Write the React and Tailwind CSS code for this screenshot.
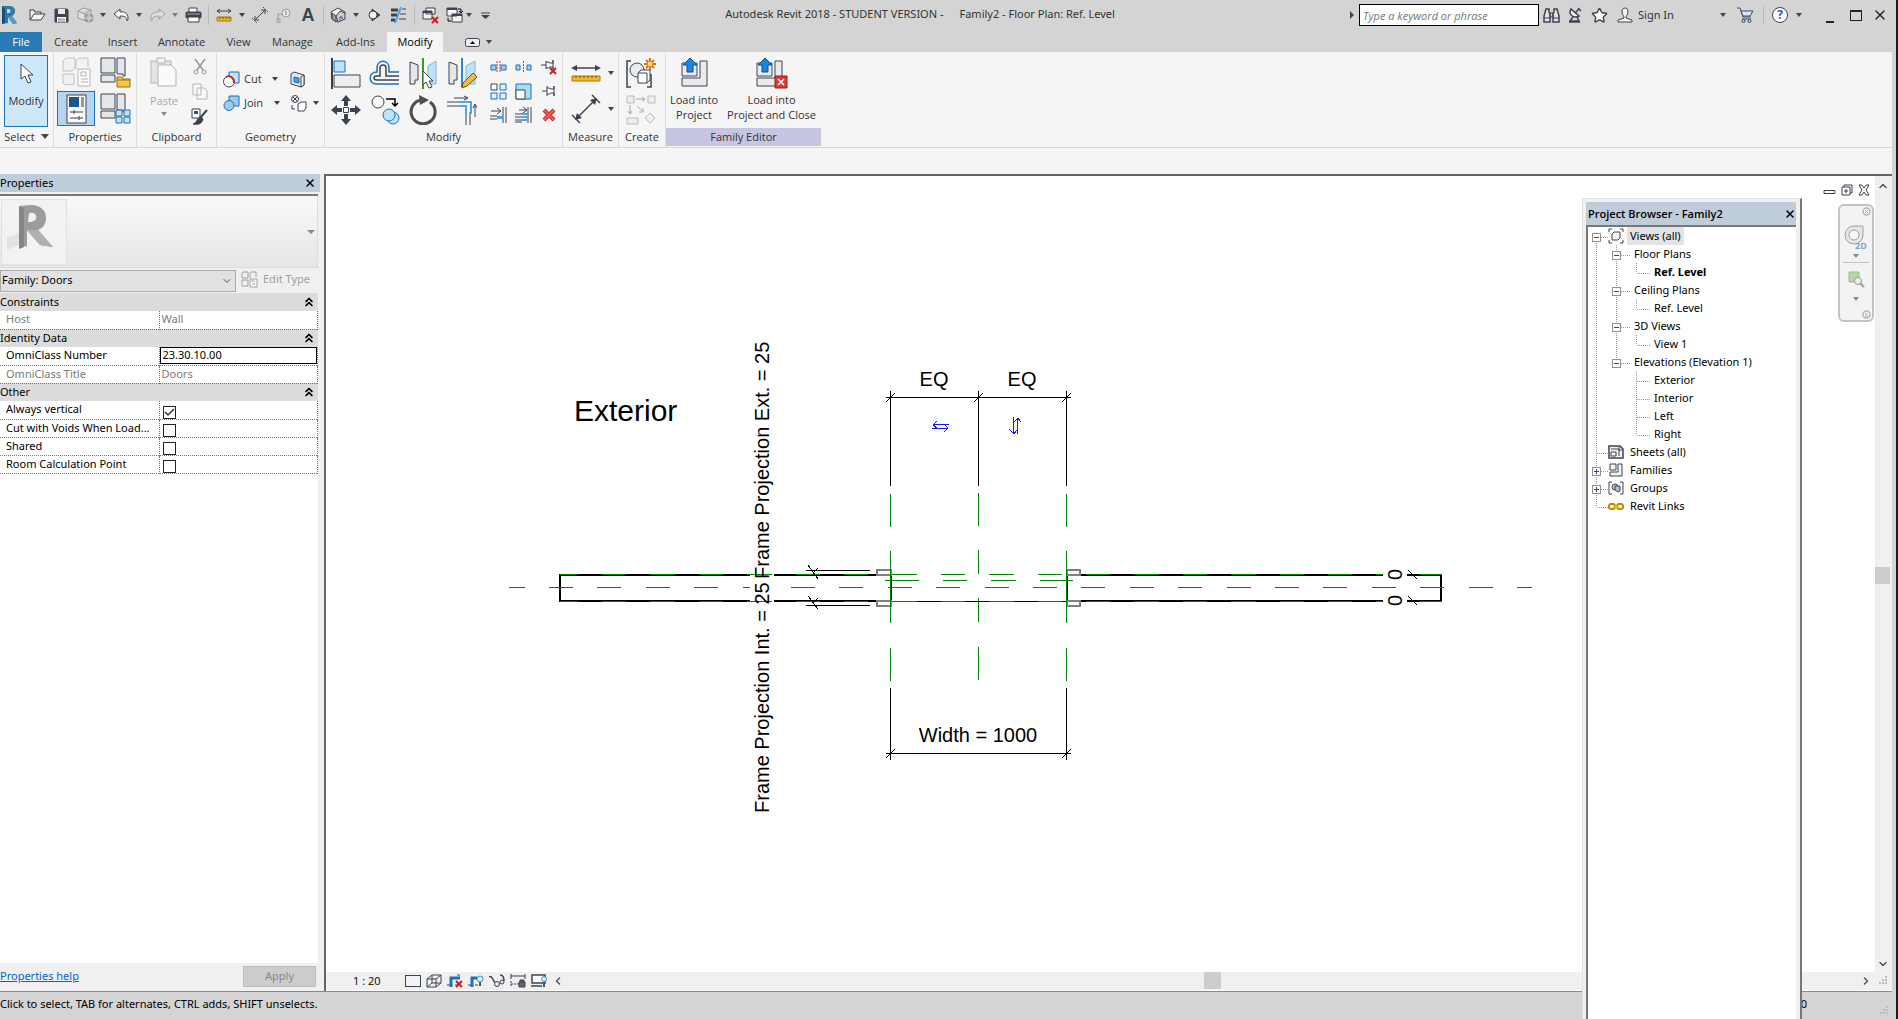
import { ChevronDown, ChevronLeft, ChevronRight, ChevronUp, ChevronsUp, Star, X } from "lucide-react";

const DARK = "#3c4350";
const BLUE = "#1a6fc0";
const SKY = "#bfe3f5";

function Icon({ w = 16, h = 16, children, className = "" }) {
  return (
    <svg width={w} height={h} viewBox={`0 0 ${w} ${h}`} fill="none" stroke={DARK} className={`shrink-0 ${className}`} aria-hidden>
      {children}
    </svg>
  );
}

function Caret({ className = "" }) {
  return (
    <svg width="6" height="4" viewBox="0 0 6 4" className={`shrink-0 fill-[#444] ${className}`} aria-hidden>
      <path d="M0 0h6L3 4z" />
    </svg>
  );
}

/* ---------- title bar icons ---------- */

const RevitLogo = () => (
  <Icon w={16} h={20}>
    <path d="M1 1h7c4 0 6 2 6 5 0 2-1 4-3 5l5 7-4 1-5-7v6l-6 1z" fill="#2d78ad" stroke="none" />
    <path d="M1 1l3 3v14l-3 1z" fill="#174f7c" stroke="none" />
    <path d="M6 4h2c2 0 2 4 0 4H6z" fill="#d4d4d4" stroke="none" />
    <path d="M11 11l5 7-4 1-5-7z" fill="#4f9acb" stroke="none" />
  </Icon>
);
const OpenIcon = () => (
  <Icon w={17} h={14}>
    <path d="M1 12V2h4l1 2h6v2" fill="#f4f4f4" />
    <path d="M1 12l4-6h11l-4 6z" fill="#f4f4f4" />
  </Icon>
);
const SaveIcon = () => (
  <Icon w={15} h={15}>
    <path d="M1 1h12l1 1v12H1z" fill={DARK} />
    <path d="M4 1h7v5H4z" fill="#e8e8e8" stroke="none" />
    <path d="M3 9h9v5H3z" fill="#fff" stroke="none" />
    <path d="M4 11h7M4 13h7" stroke="#777" />
  </Icon>
);
const SyncIcon = () => (
  <Icon w={17} h={17}>
    <path d="M1 4l5-3 8 2v6l-5 5-8-3zM1 4l7 3 6-4M8 7v7" stroke="#999" fill="#e0e0e0" />
    <circle cx="12" cy="11" r="4" fill="#aaa" stroke="#888" />
    <path d="M12 7v8M8 11h8" stroke="#ddd" />
  </Icon>
);
const ArrowIcon = ({ flip, color, fill }) => (
  <Icon w={17} h={14} className={flip ? "-scale-x-100" : ""}>
    <path d="M1 6l6-5v3c5-1 8 2 8 6 0 1 0 2-1 3 0-4-2-5-7-5v3z" fill={fill} stroke={color} strokeLinejoin="round" />
  </Icon>
);
const PrintIcon = () => (
  <Icon w={17} h={16}>
    <path d="M4 5V1h8v4" fill="#fff" />
    <rect x="1" y="5" width="15" height="6" rx="1" fill={DARK} />
    <path d="M2 7h13" stroke="#aaa" />
    <path d="M3 10h11v5H3z" fill="#fff" />
  </Icon>
);
const RulerIcon = () => (
  <Icon w={16} h={14}>
    <path d="M1 3h14M4 1L1 3l3 2M12 1l3 2-3 2" />
    <path d="M1 9h14v4H1z" fill="#f2b72c" stroke="#a9740f" />
    <path d="M4 9v2M7 9v2M10 9v2M13 9v2" stroke="#6b4c0d" />
  </Icon>
);
const DimIcon = () => (
  <Icon w={16} h={16}>
    <path d="M3 13L13 3M3 9v4h4M9 3h4v4" />
    <path d="M0 11l5 5M11 0l5 5" strokeDasharray="2 1" />
  </Icon>
);
const TagIcon = () => (
  <Icon w={16} h={15}>
    <circle cx="10" cy="5" r="4" fill="#e8e8e8" stroke="#999" />
    <path d="M9 4l1-1v4" stroke="#888" />
    <path d="M6 6H2v5" stroke="#999" />
    <rect x="1" y="11" width="3" height="3" stroke="#999" />
  </Icon>
);
const HouseIcon = () => (
  <Icon w={16} h={16}>
    <path d="M1 5l7-4 7 4-1 7-6 3-6-3z" fill="#f2f2f2" />
    <path d="M2 6l4 3v6l-4-3z" fill="#9aa3ad" />
    <path d="M6 9l4-5 5 2v6l-7 3z" fill="#c7ccd2" />
    <path d="M10 13v-3h2v2" fill="#fff" />
  </Icon>
);
const SectionIcon = () => (
  <Icon w={14} h={14}>
    <path d="M5 1l8 6-8 6z" fill={DARK} />
    <circle cx="6" cy="7" r="4" fill="#f2f2f2" />
  </Icon>
);
const ThinLinesIcon = () => (
  <Icon w={17} h={16}>
    <path d="M1 3h7M1 8h6M1 13h4" strokeWidth="3" />
    <path d="M12 2h4M10 7h6M9 12h7" />
    <path d="M11 0L5 16" stroke="#4aa0ec" strokeWidth="2" />
  </Icon>
);
const CloseHiddenIcon = () => (
  <Icon w={17} h={17}>
    <path d="M4 1h9v6H4zM1 4h9v8H1z" fill="#f4f4f4" />
    <path d="M1 5h9" strokeWidth="2" />
    <path d="M10 10l6 6M16 10l-6 6" stroke="#c91c1c" strokeWidth="2" />
  </Icon>
);
const SwitchIcon = () => (
  <Icon w={17} h={17}>
    <path d="M1 1h10v8H1zM6 7h10v8H6z" fill="#f4f4f4" />
    <path d="M1 2h10M6 8h10" strokeWidth="2" />
    <path d="M12 2h3v3M13 4l2 2 2-2M2 11v3h3" stroke="#000" />
  </Icon>
);
const CustomizeIcon = () => (
  <Icon w={9} h={7}>
    <path d="M0 1h9" strokeWidth="1" />
    <path d="M0 3h9L4.500 7z" fill={DARK} stroke="none" />
  </Icon>
);

const BarLine = () => <span className="h-5 w-px bg-[#b9b9b9]" />;

const QUICK_ACCESS = [
  { id: "Revit", w: "w-[18px]", el: <RevitLogo /> },
  { id: "Open", w: "ml-2 w-[22px]", el: <OpenIcon /> },
  { id: "Save", w: "w-[26px]", el: <SaveIcon /> },
  { id: "Synchronize", w: "w-[22px]", el: <SyncIcon /> },
  { id: "Synchronize options", w: "w-[14px]", el: <Caret /> },
  { id: "Undo", w: "w-[22px]", el: <ArrowIcon color={DARK} fill="#fff" /> },
  { id: "Undo history", w: "w-[14px]", el: <Caret /> },
  { id: "Redo", w: "w-[22px]", el: <ArrowIcon flip color="#a0a0a0" fill="#ddd" /> },
  { id: "Redo history", w: "w-[14px]", el: <Caret className="opacity-60" /> },
  { id: "Print", w: "w-[22px]", el: <PrintIcon /> },
  { sep: true, id: "s1", w: "w-[9px]" },
  { id: "Measure", w: "w-[21px]", el: <RulerIcon /> },
  { id: "Measure options", w: "w-4", el: <Caret /> },
  { id: "Aligned dimension", w: "w-5", el: <DimIcon /> },
  { id: "Tag", w: "w-7", el: <TagIcon /> },
  { id: "Text", w: "w-5", el: <span className="font-['Liberation_Sans',sans-serif] text-lg font-bold text-[#3c4350]">A</span> },
  { sep: true, id: "s2", w: "w-[10px]" },
  { id: "Default 3D view", w: "w-5", el: <HouseIcon /> },
  { id: "3D options", w: "w-4", el: <Caret /> },
  { id: "Section", w: "w-5", el: <SectionIcon /> },
  { id: "Thin lines", w: "w-7", el: <ThinLinesIcon /> },
  { sep: true, id: "s3", w: "w-1" },
  { id: "Close hidden windows", w: "w-7", el: <CloseHiddenIcon /> },
  { id: "Switch windows", w: "w-5", el: <SwitchIcon /> },
  { id: "Window list", w: "w-[10px]", el: <Caret /> },
  { id: "Customize", w: "w-[22px]", el: <CustomizeIcon /> },
];

function TitleBar() {
  return (
    <header className="flex h-[30px] shrink-0 items-center">
      <div className="flex items-center">
        {QUICK_ACCESS.map((item) =>
          item.sep ? (
            <span key={item.id} className={`flex justify-center ${item.w}`}>
              <BarLine />
            </span>
          ) : (
            <button key={item.id} type="button" aria-label={item.id} className={`flex h-5 items-center justify-center ${item.w}`}>
              {item.el}
            </button>
          )
        )}
      </div>
      <div className="flex flex-1 justify-center gap-4 pr-[6px] pb-[2px] font-['Noto_Sans',sans-serif] whitespace-nowrap text-[#333]">
        <span>Autodesk Revit 2018 - STUDENT VERSION -</span>
        <span>Family2 - Floor Plan: Ref. Level</span>
      </div>
      <div className="flex shrink-0 items-center pr-1">
        <svg width="4" height="8" className="mr-[5px] fill-[#444]" aria-hidden>
          <path d="M0 0l4 4-4 4z" />
        </svg>
        <input
          type="text"
          aria-label="Search"
          placeholder="Type a keyword or phrase"
          className="h-[22px] w-[180px] border border-black bg-white px-[3px] text-[11px] italic placeholder:text-[#777]"
        />
        <button type="button" aria-label="Find" className="flex w-6 justify-center">
          <Icon w={17} h={16}>
            <path d="M3 2h3v3l1 2v8H1V9zM11 2h3l2 7v6h-6V7l1-2z" fill="#dfe3ea" strokeWidth="1.500" />
            <path d="M7 6h3v4H7zM1 11h6M10 11h6" />
          </Icon>
        </button>
        <button type="button" aria-label="Communication center" className="flex w-6 justify-center">
          <Icon w={14} h={16}>
            <path d="M3 2c-3 5 2 10 8 7z" fill="#f2f2f2" strokeWidth="1.500" />
            <path d="M7 6l4-4M10 1l3 3M5 10l-3 4h9l-2-4M1 15h11" strokeWidth="1.500" />
          </Icon>
        </button>
        <button type="button" aria-label="Favorites" className="flex w-6 justify-center">
          <Star size={17} strokeWidth={2} className="fill-white text-[#3c4350]" />
        </button>
        <button type="button" className="ml-[6px] flex items-center gap-[5px] text-[#333]">
          <Icon w={16} h={16}>
            <path d="M5 4c0-4 6-4 6 0 0 3-1 4-2 6v1l6 2v2H1v-2l6-2v-1C6 8 5 7 5 4z" fill="#f2f2f2" />
          </Icon>
          <span className="w-[38px] text-left font-['Noto_Sans',sans-serif] whitespace-nowrap">Sign In</span>
        </button>
        <button type="button" aria-label="Account menu" className="ml-[43px] flex w-[8px] justify-center">
          <Caret />
        </button>
        <button type="button" aria-label="App store" className="ml-[8px] flex w-5 justify-center">
          <Icon w={17} h={16}>
            <path d="M0 1h3l3 9h8" stroke="#3b4a6b" />
            <path d="M4 4h12l-3 5H6z" fill="#dfe6f3" stroke="#3b4a6b" />
            <path d="M5 12h9" stroke="#3b4a6b" />
            <circle cx="6.500" cy="14" r="1.500" stroke="#3b4a6b" />
            <circle cx="12.500" cy="14" r="1.500" stroke="#3b4a6b" />
          </Icon>
        </button>
        <span className="mx-[8px]">
          <span className="block h-[18px] w-px bg-[#b9b9b9]" />
        </span>
        <button
          type="button"
          aria-label="Help"
          className="flex size-4 items-center justify-center rounded-full border border-[#3c4350] bg-white text-[12px] leading-3 font-bold text-[#2457b8]"
        >
          ?
        </button>
        <Caret className="ml-[8px]" />
        <button type="button" aria-label="Minimize" className="ml-5 flex h-4 w-4 items-end justify-center">
          <span className="h-[2px] w-2 bg-[#222]" />
        </button>
        <button type="button" aria-label="Maximize" className="ml-2 flex w-5 justify-center">
          <span className="h-[11px] w-3 border border-t-2 border-[#222]" />
        </button>
        <button type="button" aria-label="Close" className="ml-[6px] flex w-4 justify-center text-[#222]">
          <X size={16} strokeWidth={2} />
        </button>
      </div>
    </header>
  );
}

const TABS = [
  ["Create", "w-[54px]"],
  ["Insert", "w-[49px]"],
  ["Annotate", "w-[69px]"],
  ["View", "w-[45px]"],
  ["Manage", "w-[63px]"],
  ["Add-Ins", "w-[63px]"],
];

function Tabs() {
  return (
    <nav className="mt-[2px] flex h-5 shrink-0 text-[#333]">
      <button type="button" className="mr-[2px] w-[42px] bg-[#2a7ab5] text-white">
        File
      </button>
      {TABS.map(([name, width]) => (
        <button key={name} type="button" className={width}>
          {name}
        </button>
      ))}
      <button type="button" className="w-14 bg-[#f5f5f5] text-black">
        Modify
      </button>
      <button type="button" aria-label="Minimize ribbon" className="ml-[22px] flex items-center gap-[6px]">
        <Icon w={15} h={9}>
          <rect x="0.500" y="0.500" width="14" height="8" rx="2" fill="#eee" />
          <path d="M5 6l2.500-3L10 6z" fill="#000" stroke="none" />
        </Icon>
        <Caret />
      </button>
    </nav>
  );
}

/* ---------- ribbon ---------- */

function Panel({ label, width, children, className = "" }) {
  return (
    <section className={`flex shrink-0 flex-col border-r border-[#dcdcdc] ${width}`}>
      <div className={`flex h-[75px] ${className}`}>{children}</div>
      <h2 className="flex h-[17px] items-center justify-center gap-[6px] whitespace-nowrap">{label}</h2>
    </section>
  );
}

function Tool({ name, className = "", children }) {
  return (
    <button type="button" aria-label={name} className={`flex items-center justify-center ${className}`}>
      {children}
    </button>
  );
}

const TypeGrid = ({ color = DARK, fill = "#e4e7ea" }) => (
  <>
    <path d="M1 1h14v15H1zM17 1h8v18h-2v-2h-6zM1 18h14v7H1z" fill={fill} stroke={color} />
  </>
);

const LoadGlyph = () => (
  <>
    <path d="M1 5h15v13H1zM19 3h7v25H1v-8h18z" fill="#e9ebee" />
    <path d="M9 0l7 7h-4v7H6V7H2z" fill="#1c84e6" stroke="#0f4f96" />
  </>
);

function Ribbon() {
  return (
    <div className="flex h-[96px] shrink-0 border-b border-[#d6d6d6] bg-[#f5f5f5] pt-[1px] text-[#333]">
      <Panel
        width="w-[54px]"
        className="px-1 pt-[2px]"
        label={
          <>
            <span>Select</span>
            <svg width="8" height="5" className="fill-[#444]" aria-hidden>
              <path d="M0 0h8L4 5z" />
            </svg>
          </>
        }
      >
        <button type="button" className="flex h-[72px] w-11 flex-col items-center border border-[#1a73c4] bg-[#cce8f8] pt-[7px]">
          <Icon w={14} h={22}>
            <path d="M2 1v15l4-3 3 7 3-1-3-7h5z" fill="#fff" />
          </Icon>
          <span className="mt-2">Modify</span>
        </button>
      </Panel>

      <Panel label="Properties" width="w-[83px]" className="flex-wrap content-start pt-[1px] pl-[3px]">
        <Tool name="Family category" className="h-[37px] w-[38px]">
          <Icon w={31} h={31}>
            <path d="M2 4l3-3h9v10l-3 3H2zM15 4l3-3h9v9M2 17h11v10l-9 1-2-2zM15 4v8" fill="#f0f0f0" stroke="#c2c2c2" />
            <path d="M17 12h12v17H17z" fill="#fafafa" stroke="#b5b5b5" />
            <path d="M20 15h5v4h-5zM20 22h7M20 25h7" stroke="#b5b5b5" />
          </Icon>
        </Tool>
        <Tool name="Family types" className="h-[37px] w-[41px]">
          <Icon w={31} h={31}>
            <TypeGrid />
            <path d="M17 20h5l1 2h7v8H17z" fill="#f7c845" stroke="#9a6a08" />
            <path d="M17 23h13" stroke="#9a6a08" />
          </Icon>
        </Tool>
        <Tool name="Properties palette" className="h-[35px] w-[38px] border border-[#1a73c4] bg-[#b5d4f0]">
          <Icon w={21} h={30}>
            <rect x="1" y="1" width="19" height="28" fill="#fafafa" />
            <path d="M3 3h10v10H3z" fill="#1f568f" stroke="none" />
            <path d="M15 3h3v10h-3z" fill="#999" stroke="none" />
            <path d="M4 18h13M4 24h13M8 16v4M13 22v4" />
          </Icon>
        </Tool>
        <Tool name="Type properties" className="h-[35px] w-[41px]">
          <Icon w={31} h={31}>
            <TypeGrid />
            <path d="M16 17h6v6h-6zM24 17h6v6h-6zM16 24h6v6h-6zM24 24h6v6h-6z" fill={SKY} stroke={BLUE} />
          </Icon>
        </Tool>
      </Panel>

      <Panel label="Clipboard" width="w-[80px]">
        <button type="button" className="flex w-[54px] flex-col items-center pt-1 text-[#a8a8a8]">
          <Icon w={28} h={31}>
            <path d="M1 4h20v22H1z" fill="#e4e4e4" stroke="#b5b5b5" />
            <path d="M7 1h8v5H7z" fill="#f5f5f5" stroke="#b5b5b5" />
            <path d="M8 8h13l5 5v16H8z" fill="#fafafa" stroke="#b5b5b5" />
          </Icon>
          <span className="mt-[6px] leading-[14px]">Paste</span>
          <Caret className="mt-[4px] opacity-60" />
        </button>
        <div className="flex flex-col items-center justify-between pt-[5px] pb-[3px]">
          <Tool name="Cut to clipboard">
            <Icon w={16} h={17}>
              <path d="M3 1l8 11M13 1L5 12" stroke="#999" strokeWidth="1.500" />
              <circle cx="4" cy="14" r="2" stroke="#999" />
              <circle cx="12" cy="14" r="2" stroke="#999" />
            </Icon>
          </Tool>
          <Tool name="Copy to clipboard">
            <Icon w={16} h={17}>
              <path d="M1 1h8v11H1zM5 5h7l3 3v8H5z" fill="#fafafa" stroke="#b5b5b5" />
            </Icon>
          </Tool>
          <Tool name="Match type">
            <Icon w={17} h={17}>
              <path d="M1 1h8v9H1z" fill="#fff" />
              <path d="M3 3h4v3H3z" fill="#1f568f" stroke="none" />
              <path d="M16 2l-7 8" strokeWidth="2" />
              <path d="M10 9c-4 0-3 5-8 7 5 1 9 0 10-5z" fill={DARK} />
            </Icon>
          </Tool>
        </div>
      </Panel>

      <Panel label="Geometry" width="w-[108px]" className="flex-col gap-2 pt-[18px] pl-[6px]">
        <div className="flex h-4 items-center">
          <Icon w={17} h={17}>
            <path d="M6 1h10v11H6z" fill={SKY} stroke={BLUE} />
            <circle cx="6" cy="10.500" r="5.500" fill="#fff" />
            <path d="M3 6c4-2 8 1 8 6" stroke="#e01818" strokeWidth="1.500" />
          </Icon>
          <span className="ml-1 w-7">Cut</span>
          <Caret />
          <Icon w={16} h={17} className="ml-[12px]">
            <path d="M1 3l3-2 10 3v10l-3 2-10-3z" fill="#e4e7ea" />
            <path d="M4 6l5 1v5l-5-1z" fill="#4b9fe0" stroke={BLUE} />
            <path d="M11 6l3-2v10l-3 2z" fill="#fff" />
          </Icon>
        </div>
        <div className="flex h-4 items-center">
          <Icon w={17} h={17}>
            <path d="M6 1h10v10H6z" fill="#9fcbe9" stroke={BLUE} />
            <circle cx="6" cy="10.500" r="5" fill="#9fcbe9" stroke={BLUE} />
          </Icon>
          <span className="ml-1 w-7">Join</span>
          <Caret className="ml-[2px]" />
          <Icon w={17} h={17} className="ml-[10px]">
            <circle cx="5" cy="4" r="3.500" />
            <path d="M3 2l4 4M7 2L3 6M2 10v4h3" />
            <path d="M8 9l3-2h5v6l-2 3H8z" fill="#fff" />
          </Icon>
          <Caret className="ml-[6px]" />
        </div>
      </Panel>

      <Panel label="Modify" width="w-[238px]">
        <div className="grid grid-cols-[39px_39px_39px_38px] grid-rows-2 pt-[2px] pl-[1px]">
          <Tool name="Align">
            <Icon w={30} h={31}>
              <path d="M1 0v31" stroke="#000" strokeWidth="1.500" />
              <path d="M3 3h11v11H3z" fill={SKY} stroke={BLUE} />
              <path d="M3 17h26v12H3z" fill="#eceef0" />
            </Icon>
          </Tool>
          <Tool name="Offset">
            <Icon w={31} h={28}>
              <path d="M30 13H20V9c0-9-12-9-12 0v4c-9 0-9 12 0 12h22" stroke={BLUE} strokeWidth="1.500" />
              <path d="M30 17H17V9c0-4-6-4-6 0v8H8c-4 0-4 4 0 4h22" stroke={DARK} strokeWidth="1.500" />
            </Icon>
          </Tool>
          <Tool name="Mirror - pick axis">
            <Icon w={29} h={31}>
              <path d="M1 4l8 3v15H6v4H1z" fill="#e4e7ea" />
              <path d="M27 3l-8 5v14h3v4h5z" fill={SKY} stroke="#7ab8de" />
              <path d="M14 0v31" stroke="#2ea51a" strokeWidth="2" />
              <path d="M14 13v14l3-3 3 6 3-1-3-6h4z" fill="#fff" />
            </Icon>
          </Tool>
          <Tool name="Mirror - draw axis">
            <Icon w={31} h={31}>
              <path d="M2 4l8 3v15H7v4H2z" fill="#e4e7ea" />
              <path d="M28 3l-9 5v14h4v4h5z" fill={SKY} stroke="#7ab8de" />
              <path d="M15 0v29" stroke="#2b87dc" strokeWidth="2" />
              <path d="M16 25l10-10 4 4-10 9-5 2z" fill="#f3b944" stroke="#7a4d10" />
            </Icon>
          </Tool>
          <Tool name="Move">
            <Icon w={30} h={30}>
              <path d="M15 0l5 6h-3v5h-4V6h-3zM15 30l5-6h-3v-5h-4v5h-3zM0 15l6-5v3h5v4H6v3zM30 15l-6-5v3h-5v4h5v3z" fill={DARK} stroke="none" />
              <path d="M12.500 12.500h5v5h-5z" fill="#fff" />
            </Icon>
          </Tool>
          <Tool name="Copy">
            <Icon w={30} h={30}>
              <circle cx="8" cy="7" r="6" fill="#fafafa" />
              <path d="M16 4h9v6M22 8l3 3 3-3" stroke="#000" strokeWidth="1.500" />
              <circle cx="23" cy="23" r="6" fill={SKY} stroke={BLUE} />
              <circle cx="19" cy="20" r="6" fill={SKY} stroke={BLUE} />
            </Icon>
          </Tool>
          <Tool name="Rotate">
            <Icon w={30} h={30}>
              <path d="M12 5a12 12 0 109 2" stroke="#4a4e55" strokeWidth="3" />
              <path d="M10 0l10 5-9 5z" fill="#4a4e55" stroke="none" />
            </Icon>
          </Tool>
          <Tool name="Trim / extend to corner">
            <Icon w={30} h={30}>
              <path d="M7 3h13M17 1l4 2-4 2M28 22V10M26 13l2-4 2 4" />
              <path d="M0 7h13M0 11h13M19 30V17M23 30V17" />
              <path d="M13 7h11v12M13 11h6v8" stroke="#4aa5ee" strokeWidth="2" />
            </Icon>
          </Tool>
        </div>
        <div className="grid grid-cols-[25px_25px_26px] grid-rows-[24px_24px_24px] pt-[2px] pl-[5px]">
          <Tool name="Split element">
            <Icon w={17} h={14}>
              <path d="M1 5h5v5H1zM11 5h5v5h-5z" fill="#9fd0f0" stroke={BLUE} />
              <path d="M7 1v12M10 1v12" stroke="#c63a2e" strokeDasharray="2 1" />
            </Icon>
          </Tool>
          <Tool name="Split with gap">
            <Icon w={17} h={14}>
              <path d="M1 5h4v5H1zM12 5h4v5h-4z" fill="#9fd0f0" stroke={BLUE} />
              <path d="M8.500 1v12" stroke="#c63a2e" strokeDasharray="2 1" />
            </Icon>
          </Tool>
          <Tool name="Unpin">
            <Icon w={17} h={16}>
              <path d="M0 6h5M5 2v8M5 3h2l2 1h3V1v9V8H9L7 9H5" />
              <path d="M9 9l6 6M15 9l-6 6" stroke="#c91c1c" strokeWidth="2" />
            </Icon>
          </Tool>
          <Tool name="Array">
            <Icon w={17} h={17}>
              <path d="M1 1h6v6H1z" fill="#fff" />
              <path d="M10 1h6v6h-6zM1 10h6v6H1zM10 10h6v6h-6z" fill="#e3f2fb" stroke={BLUE} />
            </Icon>
          </Tool>
          <Tool name="Scale">
            <Icon w={17} h={17}>
              <path d="M1 1h15v15H1z" fill="#a9dcee" stroke={BLUE} />
              <path d="M1 7h9v9H1z" fill="#fff" />
            </Icon>
          </Tool>
          <Tool name="Pin">
            <Icon w={15} h={12}>
              <path d="M0 6h5M5 1v10M5 3h2l2 1h3V1v10V8H9L7 9H5" fill="#fff" />
            </Icon>
          </Tool>
          <Tool name="Trim / extend single">
            <Icon w={17} h={16}>
              <path d="M1 4h9M7 1l4 3-4 3M13 0v16M16 0v16M0 9h7M0 12h7" />
              <path d="M7 9h6v3H7z" fill="#4aa5ee" stroke="none" />
            </Icon>
          </Tool>
          <Tool name="Trim / extend multiple">
            <Icon w={17} h={16}>
              <path d="M4 3h7M8 0l4 3-4 3M13 0v16M16 0v16M0 7h7M0 10h7M0 13h7M0 15h7" />
              <path d="M7 7h6M7 10h6M7 13h6" stroke="#4aa5ee" strokeWidth="2" />
            </Icon>
          </Tool>
          <Tool name="Delete">
            <Icon w={14} h={14}>
              <path d="M2 2l10 10M12 2L2 12" stroke="#c92a2a" strokeWidth="4" />
              <path d="M2 2l10 10M12 2L2 12" stroke="#ee5a5a" strokeWidth="2" />
            </Icon>
          </Tool>
        </div>
      </Panel>

      <Panel label="Measure" width="w-[56px]" className="flex-col pt-[2px] pl-[3px]">
        <Tool name="Measure distance" className="h-[36px] gap-[7px]">
          <Icon w={30} h={18}>
            <path d="M2 4h26" strokeWidth="1.500" />
            <path d="M0 4l6-3v6zM30 4l-6-3v6z" fill={DARK} stroke="none" />
            <path d="M1 12h28v5H1z" fill="#f2b72c" stroke="#a9740f" />
            <path d="M5 12v2M9 12v2M13 12v2M17 12v2M21 12v2M25 12v2" stroke="#6b4c0d" />
          </Icon>
          <Caret />
        </Tool>
        <Tool name="Dimension" className="h-[36px] gap-[7px]">
          <Icon w={30} h={30}>
            <path d="M6 24L24 6" strokeWidth="1.500" />
            <path d="M4 26l2-7 5 5zM26 4l-7 2 5 5z" fill={DARK} stroke="none" />
            <path d="M1 21l8 8M21 1l8 8" strokeWidth="1.500" />
          </Icon>
          <Caret />
        </Tool>
      </Panel>

      <Panel label="Create" width="w-[47px]" className="flex-col pt-[2px] pr-[2px]">
        <Tool name="Create group" className="h-[37px]">
          <Icon w={32} h={32}>
            <path d="M6 3H2v26h4M22 29h4V16" strokeWidth="1.500" />
            <circle cx="12" cy="12" r="7" fill="#e9ebee" />
            <path d="M13 15l3-3h9v10l-3 3h-9zM13 15h9v10" fill="#fff" />
            <path d="M25 0v12M19 6h12M21 2l8 8M29 2l-8 8" stroke="#e8690b" strokeWidth="2" />
            <circle cx="25" cy="6" r="3" fill="#ffe08a" stroke="#e8690b" />
          </Icon>
        </Tool>
        <Tool name="Create similar" className="h-[35px]">
          <Icon w={30} h={30}>
            <path d="M1 1h7v7H1zM22 1h7v7h-7zM1 23h11v6H1zM24 18l5 5-5 5-5-5z" fill="#eee" stroke="#bbb" />
            <path d="M10 4h9M16 2l3 2-3 2M4 10v9M2 16l2 3 2-3M11 11l6 6M17 13v4h-4" stroke="#aaa" />
          </Icon>
        </Tool>
      </Panel>

      <section className="flex w-[155px] shrink-0 flex-col">
        <div className="flex h-[75px]">
          <button type="button" className="flex w-[56px] flex-col items-center pt-[5px] whitespace-nowrap">
            <Icon w={27} h={31}>
              <LoadGlyph />
            </Icon>
            <span className="mt-[3px] leading-[15px]">
              Load into
              <br />
              Project
            </span>
          </button>
          <button type="button" className="flex w-[99px] flex-col items-center pt-[5px] whitespace-nowrap">
            <Icon w={32} h={31}>
              <LoadGlyph />
              <path d="M19 18h12v12H19z" fill="#d83a34" stroke="#9b1c1c" />
              <path d="M22 21l6 6M28 21l-6 6" stroke="#fff" strokeWidth="1.500" />
            </Icon>
            <span className="mt-[3px] leading-[15px]">
              Load into
              <br />
              Project and Close
            </span>
          </button>
        </div>
        <h2 className="h-[18px] bg-[#c6c6e3] text-center leading-[17px]">Family Editor</h2>
      </section>
    </div>
  );
}

/* ---------- properties palette ---------- */

const GROUPS = [
  { title: "Constraints", rows: [{ name: "Host", value: "Wall", muted: true }] },
  {
    title: "Identity Data",
    rows: [
      { name: "OmniClass Number", value: "23.30.10.00", input: true },
      { name: "OmniClass Title", value: "Doors", muted: true },
    ],
  },
  {
    title: "Other",
    rows: [
      { name: "Always vertical", check: true, on: true },
      { name: "Cut with Voids When Load...", check: true },
      { name: "Shared", check: true },
      { name: "Room Calculation Point", check: true },
    ],
  },
];

function PropertyRow({ row }) {
  const id = row.name.replace(/\W+/g, "-").toLowerCase();
  const editable = row.input || row.check;
  return (
    <tr className={`h-[18px] border-b border-dotted border-[#777] align-top ${row.muted ? "text-[#7a7a7a]" : "text-black"}`}>
      <th scope="row" className="border-r border-dotted border-[#777] p-0 pl-[6px] text-left font-normal whitespace-nowrap">
        {editable ? <label htmlFor={id}>{row.name}</label> : row.name}
      </th>
      <td className={`border-r border-dotted border-[#777] p-0 ${row.check ? "align-bottom" : ""}`}>
        {row.input && <input id={id} type="text" defaultValue={row.value} className="block h-[17px] w-full border border-black bg-white px-[2px] pb-[2px]" />}
        {row.check && (
          <span className="relative ml-[3px] block size-[13px]">
            <input id={id} type="checkbox" defaultChecked={row.on} className="peer block size-[13px] appearance-none border border-[#222] bg-white" />
            <svg viewBox="0 0 13 13" className="pointer-events-none absolute inset-0 hidden stroke-[#333] peer-checked:block" fill="none" aria-hidden>
              <path d="M2 6l3 3 6-6" strokeWidth="1.500" />
            </svg>
          </span>
        )}
        {!editable && <span className="pl-[2px]">{row.value}</span>}
      </td>
    </tr>
  );
}

function Properties() {
  return (
    <aside className="flex w-[320px] shrink-0 flex-col bg-[#f0f0f0] font-['Noto_Sans',sans-serif]">
      <div className="flex h-[18px] shrink-0 items-center justify-between bg-[#bfcddb] pr-1 text-black">
        <h2>Properties</h2>
        <button type="button" aria-label="Close properties">
          <X size={12} strokeWidth={3} />
        </button>
      </div>
      <div className="mt-[2px] mr-[2px] flex flex-1 flex-col border-t-2 border-[#777] bg-white">
        <div className="flex h-[72px] shrink-0 items-center justify-between border-r border-b border-[#ddd] bg-linear-to-b from-[#f9f9f9] to-[#e6e6e6] pr-[2px] pl-px">
          <div className="flex h-[66px] w-[66px] justify-center border border-[#e0e0e0] bg-[#f2f2f2] pt-1">
            <Icon w={54} h={50}>
              <path d="M0 34L14 28v12L0 46z" fill="#e2e2e2" stroke="none" />
              <path d="M12 2l12-1c9 0 15 5 15 13 0 6-3 10-8 12l15 17-13-2-13-15v16l-8 2z" fill="#9c9c9c" stroke="none" />
              <path d="M12 2l5 3v38l-5 2z" fill="#858585" stroke="none" />
              <path d="M22 9c9-2 10 8 2 9h-3z" fill="#f0f0f0" stroke="none" />
              <path d="M31 26l15 17-13-2-13-15z" fill="#b0b0b0" stroke="none" />
            </Icon>
          </div>
          <svg width="8" height="4" className="fill-[#888]" aria-hidden>
            <path d="M0 0h8L4 4z" />
          </svg>
        </div>
        <div className="flex h-[25px] shrink-0 items-center bg-[#f0f0f0]">
          <div className="relative w-[236px]">
            <select aria-label="Family" className="block h-[22px] w-full appearance-none border border-[#adadad] bg-[#e1e1e1] pb-[2px] pl-[1px] text-black">
              <option>Family: Doors</option>
            </select>
            <ChevronDown size={12} className="pointer-events-none absolute top-[5px] right-[3px] text-[#555]" />
          </div>
          <button type="button" disabled className="flex items-center gap-[5px] pb-[3px] pl-[5px] text-[#a0a0a0]">
            <Icon w={17} h={17}>
              <path d="M1 2l1-1h5v6H1zM9 2l1-1h5v5M1 9h6v6H1zM9 2v5" stroke="#a0a0a0" />
              <path d="M9 8h7v8H9z" fill="#fff" stroke="#a0a0a0" />
              <path d="M10 10h4M11 13h3" stroke="#a0a0a0" />
            </Icon>
            Edit Type
          </button>
        </div>
        <table className="w-full table-fixed border-collapse">
          <colgroup>
            <col className="w-[159px]" />
            <col />
          </colgroup>
          {GROUPS.map((group) => (
            <tbody key={group.title}>
              <tr className="h-[18px] bg-[#dcdcdc] text-black">
                <th colSpan={2} scope="colgroup" className="p-0 text-left font-normal">
                  <div className="flex items-center justify-between pr-[2px]">
                    {group.title}
                    <ChevronsUp size={14} strokeWidth={3} />
                  </div>
                </th>
              </tr>
              {group.rows.map((row) => (
                <PropertyRow key={row.name} row={row} />
              ))}
            </tbody>
          ))}
        </table>
      </div>
      <div className="flex h-[28px] shrink-0 items-center justify-between pr-1 pb-[2px]">
        <a href="#help" className="text-[#0066cc] underline">
          Properties help
        </a>
        <button type="button" disabled className="h-[21px] w-[73px] border border-[#bfbfbf] bg-[#cccccc] text-[#888]">
          Apply
        </button>
      </div>
    </aside>
  );
}

/* ---------- drawing area ---------- */

const GRID = "#008000";
const DIM_XS = [890, 978, 1066];

function Drawing() {
  return (
    <svg
      width="1549"
      height="796"
      viewBox="326 176 1549 796"
      className="block shrink-0 font-['Liberation_Sans',Arial,sans-serif]"
      fill="none"
      stroke="#000"
      shapeRendering="crispEdges"
      role="img"
      aria-label="Door family floor plan"
    >
      {/* host wall */}
      <g strokeWidth="2">
        <path d="M750 575H560V601H750M774 575H877M774 601H877M891 575V602" />
        <path d="M1080 575H1383M1080 601H1383M1407 575H1441V601H1407M1067 575V602" />
      </g>
      <path d="M891 601.500H1067" />

      {/* frame profiles */}
      <g stroke="#808080" strokeWidth="2">
        <path d="M877 570H891V575H877zM877 601H891V606H877z" />
        <path d="M1067 570H1080V575H1067zM1067 601H1080V606H1067z" />
      </g>

      {/* reference planes */}
      <g stroke={GRID}>
        <path d="M560 574.500H578M560 601.500H578" />
        <path d="M602 574.500H1383M602 601.500H1383M1419 574.500H1442M1419 601.500H1442" strokeDasharray="24.400 24" />
        <path d="M509 587.500H525" />
        <path d="M549 587.500H750M791 587.500H1532" strokeDasharray="24 24.400" />
        <path d="M885 580.500H919M943 580.500H967M991 580.500H1016M1040 580.500H1073" />
        <path d="M890.500 494V527M890.500 551V623M890.500 648V681" />
        <path d="M1066.500 494V527M1066.500 551V623M1066.500 648V681" />
        <path d="M978.500 493V526M978.500 550V574M978.500 598V622M978.500 647V680" />
      </g>

      {/* dimensions */}
      <path d="M890.500 391V486M978.500 391V486M1066.500 391V486M886 397.500H1071" />
      <path d="M890.500 688V760M1066.500 688V760M886 753.500H1071" />
      {DIM_XS.map((x) => (
        <path key={x} d={`M${x - 4} 402l9 -9`} />
      ))}
      <path d="M886 758l9-9M1062 758l9-9" />
      <path d="M806 570.500H870M806 605.500H870M808 565l10 14M813 573l5-5M808 596l10 13M813 603l5-5" />
      <path d="M1408 570l9 9M1408 596l9 9" />

      {/* flip controls */}
      <g stroke="#1414ff">
        <path d="M933 424.500H949M937 421l-4 4 4 3M932 428.500H948M944 424l4 4-4 4" />
        <path d="M1013.500 417V433M1009 429l5 5 3-4M1017.500 418V434M1014 422l4-4 3 4" />
      </g>

      <g fill="#000" stroke="none" fontSize="20">
        <text x="574" y="421" fontSize="30">
          Exterior
        </text>
        <text x="934" y="386" textAnchor="middle">
          EQ
        </text>
        <text x="1022" y="386" textAnchor="middle">
          EQ
        </text>
        <text x="978" y="742" textAnchor="middle">
          Width = 1000
        </text>
        <text transform="translate(769 579) rotate(-90)">Frame Projection Ext. = 25</text>
        <text transform="translate(769 813) rotate(-90)">Frame Projection Int. = 25</text>
        <text transform="translate(1402 580) rotate(-90)">0</text>
        <text transform="translate(1402 606) rotate(-90)">0</text>
      </g>
    </svg>
  );
}

function NavigationBar() {
  return (
    <div className="absolute top-[28px] right-[1px] flex h-[118px] w-9 flex-col items-center rounded-md border-2 border-[#c4c4c4] bg-[#f3f3f3]">
      <button type="button" aria-label="Close navigation bar" className="mt-[1px] mr-[1px] self-end">
        <Icon w={9} h={9}>
          <circle cx="4.500" cy="4.500" r="3.500" stroke="#b5b5b5" strokeWidth="1.500" />
          <path d="M3 3l3 3M6 3L3 6" stroke="#b5b5b5" />
        </Icon>
      </button>
      <button type="button" aria-label="Steering wheel" className="mt-[9px] ml-[2px]">
        <Icon w={26} h={26}>
          <path d="M10 1h9v9a9 9 0 11-9-9z" fill="#e6e6e6" stroke="#a0a0a0" />
          <circle cx="10" cy="10" r="5" fill="#f8f8f8" stroke="#a0a0a0" />
          <text x="11" y="24" fontSize="9" fontWeight="bold" fill="#7fa4cf" stroke="none">
            2D
          </text>
        </Icon>
      </button>
      <Caret className="mt-[3px] opacity-60" />
      <span className="mt-[4px] h-px w-[26px] bg-[#c4c4c4]" />
      <button type="button" aria-label="Zoom in region" className="mt-[8px]">
        <Icon w={17} h={17}>
          <path d="M1 1h10v10H1z" fill="#b7d4a8" stroke="#9bbf8a" />
          <circle cx="10" cy="10" r="3.500" fill="#eee" stroke="#999" />
          <path d="M12 12l4 4" stroke="#999" strokeWidth="2" />
        </Icon>
      </button>
      <Caret className="mt-[9px] opacity-60" />
      <span className="mt-[9px] mr-[1px] self-end">
        <Icon w={9} h={9}>
          <circle cx="4.500" cy="4.500" r="3.500" stroke="#b5b5b5" strokeWidth="1.500" />
          <path d="M3 4h3M3 6h3" stroke="#b5b5b5" />
        </Icon>
      </span>
    </div>
  );
}

function DocumentButtons() {
  return (
    <div className="absolute top-[8px] right-[5px] flex items-center gap-[5px]">
      <button type="button" aria-label="Minimize view">
        <Icon w={13} h={12}>
          <path d="M1 6.500h11v3H1z" fill="#fff" />
        </Icon>
      </button>
      <button type="button" aria-label="Restore view">
        <Icon w={12} h={12}>
          <path d="M3 3V1h8v8H9M1 3h8v8H1zM4 6h2v2H4z" />
        </Icon>
      </button>
      <button type="button" aria-label="Close view">
        <Icon w={12} h={12}>
          <path d="M1 1h3l2 3 2-3h3L8 6l3 5H8L6 8l-2 3H1l3-5z" fill="#fff" />
        </Icon>
      </button>
    </div>
  );
}

const Grip = ({ className = "" }) => (
  <svg width="9" height="9" className={`fill-[#bdbdbd] ${className}`} aria-hidden>
    <path d="M6 0h2v2H6zM3 3h2v2H3zM6 3h2v2H6zM0 6h2v2H0zM3 6h2v2H3zM6 6h2v2H6z" />
  </svg>
);

const VIEW_TOOLS = [
  ["Detail level", <rect key="a" x="0.500" y="2.500" width="15" height="11" fill="#f0f2f8" />],
  ["Visual style", <path key="b" d="M1 6h9v8H1zM1 6l5-4h9l-5 4M15 2v8l-5 4M6 2v8h9M6 10l-5 4" />],
  [
    "Hide crop region",
    <g key="c">
      <path d="M4 14V5h9" stroke={BLUE} strokeWidth="3" />
      <path d="M0 12h3M10 2h3M8 12h3" />
      <path d="M9 8l6 6M15 8l-6 6" stroke="#c91c1c" strokeWidth="2" />
    </g>,
  ],
  [
    "Show crop region",
    <g key="d">
      <path d="M4 14V5h5" stroke={BLUE} strokeWidth="3" />
      <path d="M0 12h3M7 12h3" />
      <circle cx="12" cy="6" r="3" fill="#d8ecfb" stroke="#4b8fd0" />
      <path d="M12 9v4" strokeWidth="2" stroke="#556" />
    </g>,
  ],
  [
    "Temporary hide",
    <g key="e">
      <path d="M0 4c4-2 3 4 6 5M11 2c3 0 4 2 4 6" strokeWidth="1.500" />
      <circle cx="8" cy="11" r="2.500" fill="#dfeaf2" />
      <circle cx="13" cy="9" r="2" fill="#dfeaf2" />
    </g>,
  ],
  [
    "Reveal constraints",
    <g key="f">
      <path d="M1 1v5M15 1v5M1 3h14" />
      <path d="M1 8v6M1 11h9" strokeDasharray="2 1" />
      <path d="M9 9h6v5H9zM10 9V7h4v2" fill="#666" />
    </g>,
  ],
  [
    "Preview visibility",
    <g key="g">
      <path d="M1 2h13v8H1zM0 13h11" fill="#fff" strokeWidth="1.500" />
      <circle cx="13" cy="6" r="2.500" fill="#d8ecfb" stroke="#4b8fd0" />
      <path d="M13 9v5" strokeWidth="2" stroke="#556" />
    </g>,
  ],
];

function Canvas() {
  return (
    <main className="ml-[4px] flex min-w-0 flex-1 flex-col border-t-2 border-l-2 border-[#666] bg-white">
      <div className="flex min-h-0 flex-1">
        <div className="relative min-w-0 flex-1 overflow-hidden">
          <Drawing />
          <DocumentButtons />
          <NavigationBar />
        </div>
        <div className="flex w-[17px] shrink-0 flex-col items-center justify-between bg-[#f0f0f0] pt-1 pr-[2px] pb-[2px] text-[#555]">
          <ChevronUp size={12} strokeWidth={3} />
          <span className="h-[17px] w-[15px] bg-[#cdcdcd]" />
          <ChevronDown size={12} strokeWidth={3} />
        </div>
      </div>
      <div className="flex h-[19px] shrink-0 items-center border-b border-white bg-[#f0f0f0] pb-[1px] text-black">
        <button type="button" className="w-[79px] pl-[27px] text-left whitespace-nowrap">
          1 : 20
        </button>
        <div className="flex gap-[5px]">
          {VIEW_TOOLS.map(([name, glyph]) => (
            <button key={name} type="button" aria-label={name}>
              <Icon>{glyph}</Icon>
            </button>
          ))}
        </div>
        <ChevronLeft size={12} strokeWidth={3} className="ml-[5px] text-[#555]" />
        <div className="flex h-full flex-1 justify-center">
          <span className="h-full w-[17px] bg-[#cdcdcd]" />
        </div>
        <ChevronRight size={12} strokeWidth={3} className="mr-[7px] text-[#555]" />
        <Grip className="mr-1" />
      </div>
    </main>
  );
}

/* ---------- project browser ---------- */

const TREE_ICONS = {
  views: (
    <>
      <path d="M4 1H1v3M12 1h3v3M1 12v3h3M15 12v3h-3" />
      <path d="M4 6l2-2h6v6l-2 2H4z" fill="#f4f4f4" />
    </>
  ),
  sheets: (
    <>
      <path d="M1 2h11l3 3v9H1z" fill="#f4f4f4" strokeWidth="1.500" />
      <path d="M3 5h8v7M3 8h5v4H3zM11 3v3h3" />
    </>
  ),
  families: <path d="M2 2h6v6H2zM10 2h4v12H2v-4h8z" fill="#f4f4f4" />,
  groups: (
    <>
      <path d="M4 2H1v12h3M12 2h3v12h-3" />
      <circle cx="7" cy="7" r="3" fill="#ccd" />
      <path d="M7 6h5v5l-2 1-3-2z" fill="#bbc" />
    </>
  ),
  links: (
    <>
      <rect x="1" y="6" width="6" height="5" rx="2" stroke="#c58a00" strokeWidth="2" />
      <rect x="9" y="6" width="6" height="5" rx="2" stroke="#c58a00" strokeWidth="2" />
      <path d="M5 8.500h6" stroke="#f0bf2c" strokeWidth="2" />
    </>
  ),
};

const TREE = [
  { depth: 0, box: "-", icon: "views", text: "Views (all)", selected: true },
  { depth: 1, box: "-", text: "Floor Plans" },
  { depth: 2, text: "Ref. Level", bold: true, last: true },
  { depth: 1, box: "-", text: "Ceiling Plans" },
  { depth: 2, text: "Ref. Level", last: true },
  { depth: 1, box: "-", text: "3D Views" },
  { depth: 2, text: "View 1", last: true },
  { depth: 1, box: "-", text: "Elevations (Elevation 1)", last: true },
  { depth: 2, text: "Exterior", end: true },
  { depth: 2, text: "Interior", end: true },
  { depth: 2, text: "Left", end: true },
  { depth: 2, text: "Right", last: true, end: true },
  { depth: 0, icon: "sheets", text: "Sheets (all)" },
  { depth: 0, box: "+", icon: "families", text: "Families" },
  { depth: 0, box: "+", icon: "groups", text: "Groups" },
  { depth: 0, icon: "links", text: "Revit Links", last: true },
];

const BOX_X = [9, 29, 49];
const STUB_X = [20, 43, 63];

/* connector lines and the expand box in front of one tree row */
function TreeLines({ item, first }) {
  const x = BOX_X[item.depth];
  const stub = STUB_X[item.depth];
  return (
    <svg width={stub} height="18" className="shrink-0" fill="none" shapeRendering="crispEdges" aria-hidden>
      <g stroke="#999" strokeDasharray="1 1">
        {item.depth > 0 && <path d="M8.500 0V18" />}
        {item.depth > 1 && !item.end && <path d="M28.500 0V18" />}
        <path d={`M${x - 0.5} ${first ? 10 : 0}V${item.last ? 10 : 18}M${x} 10.500H${stub}`} />
      </g>
      {item.box && (
        <g>
          <rect x={x - 4.5} y="6.500" width="8" height="8" fill="#fff" stroke="#919191" />
          <path d={`M${x - 3} 10.500h5${item.box === "+" ? "m-2.500-2.500v5" : ""}`} stroke="#2b4d9b" />
        </g>
      )}
    </svg>
  );
}

function ProjectBrowser() {
  return (
    <aside className="absolute top-[198px] right-[94px] bottom-0 flex w-[220px] flex-col border-t border-r-2 border-l border-[#e3e3e3] border-r-[#777] bg-[#f0f0f0] pt-[3px] pr-[4px] pl-[3px] text-black">
      <div className="flex h-[23px] shrink-0 items-center justify-between bg-[#bfcddb] pl-[2px]">
        <h2 className="font-semibold whitespace-nowrap">Project Browser - Family2</h2>
        <button type="button" aria-label="Close project browser">
          <X size={12} strokeWidth={3} />
        </button>
      </div>
      <ul className="flex-1 border-t-2 border-l-2 border-[#777] bg-white font-['Noto_Sans',sans-serif]">
        {TREE.map((item, i) => (
          <li key={`${item.text}-${i}`} className="flex h-[18px] items-center">
            <TreeLines item={item} first={i === 0} />
            {item.icon && <Icon className="mr-[3px]">{TREE_ICONS[item.icon]}</Icon>}
            <span
              className={`h-[18px] leading-[18px] whitespace-nowrap ${item.icon ? "px-[3px]" : "pl-[3px]"} ${item.selected ? "bg-[#e3e3e3]" : ""} ${
                item.bold ? "font-bold" : ""
              }`}
            >
              {item.text}
            </span>
          </li>
        ))}
      </ul>
    </aside>
  );
}

export default function App() {
  return (
    <div className="relative flex h-screen flex-col overflow-hidden border-r-2 border-[#1c1c1c] bg-[#d4d4d4] pr-1 font-['Open_Sans','Noto_Sans',sans-serif] text-[11px] leading-4 text-black">
      <TitleBar />
      <Tabs />
      <Ribbon />
      <div className="h-[26px] shrink-0 bg-[#f5f5f5]" />
      <div className="flex min-h-0 flex-1 bg-[#f0f0f0]">
        <Properties />
        <Canvas />
      </div>
      <footer className="flex h-[28px] shrink-0 items-center justify-between border-t border-[#888] pr-[3px] pb-[3px] font-['Noto_Sans',sans-serif]">
        <span>Click to select, TAB for alternates, CTRL adds, SHIFT unselects.</span>
        <span className="flex items-center gap-[73px]">
          <span>0</span>
          <Grip className="mt-3" />
        </span>
      </footer>
      <ProjectBrowser />
    </div>
  );
}
